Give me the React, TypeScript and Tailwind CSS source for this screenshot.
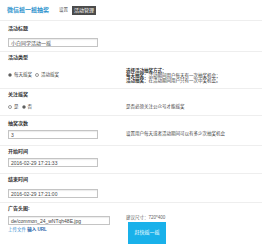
import React from 'react';

const FONT = "font-['Liberation_Sans','Noto_Sans_CJK_SC',sans-serif]";

function Radio({ checked, label }: { checked?: boolean; label: string }) {
  return (
    <span className="flex items-center gap-[2px] mr-[3px]">
      <span className="w-[4px] h-[4px] rounded-full border-[0.5px] border-[#999] bg-white flex items-center justify-center">
        {checked && <span className="w-[2px] h-[2px] rounded-full bg-[#333]" />}
      </span>
      <span>{label}</span>
    </span>
  );
}

function Input({ value, width = 'w-[90px]' }: { value: string; width?: string }) {
  return (
    <div
      className={`${width} h-[9px] border-[0.5px] border-[#c4c4c4] bg-white pl-[2px] text-[5px] leading-[8px] text-[#444] shadow-[inset_0_1px_1px_rgba(0,0,0,0.08)] overflow-hidden whitespace-nowrap`}
    >
      {value}
    </div>
  );
}

function Label({ text }: { text: string }) {
  return <div className="h-[10px] leading-[10px] text-[5px] font-bold text-[#333] pl-[8px]">{text}</div>;
}

export default function App() {
  return (
    <div className={`w-[262px] h-[249px] bg-white overflow-hidden ${FONT}`}>
      <div className="h-[21px] flex items-center pl-[7px] border-b-[0.5px] border-[#eee]">
        <span className="text-[6px] font-bold text-[#2a91cc]">微信摇一摇抽奖</span>
        <span className="ml-[10px] text-[4.5px] text-[#555]">设置</span>
        <span className="ml-[4px] bg-[#4b4b4b] text-white text-[5px] px-[2px] h-[9px] leading-[9px]">活动管理</span>
      </div>

      <div className="pt-[2px] pb-[4px] border-b-[0.5px] border-[#eee]">
        <Label text="活动标题" />
        <div className="pl-[8px] mt-[5px]">
          <Input value="小白同学活动一摇" />
        </div>
      </div>

      <div className="border-b-[0.5px] border-[#eee]">
        <Label text="活动类型" />
        <div className="h-[26px] flex items-center">
          <div className="w-[126px] pl-[8px] flex items-center text-[4.5px] text-[#444]">
            <Radio checked label="每天摇奖" />
            <Radio label="活动摇奖" />
          </div>
          <div className="text-[4.5px] leading-[5px] text-[#333] font-bold">
            <div>选择活动抽奖方式：</div>
            <div>每天抽奖：<span className="font-normal">活动期间用户每天有一次抽奖机会；</span></div>
            <div>活动抽奖：<span className="font-normal">在活动期间用户只有一次中奖机会。</span></div>
          </div>
        </div>
      </div>

      <div className="border-b-[0.5px] border-[#eee]">
        <Label text="关注摇奖" />
        <div className="h-[16px] flex items-center">
          <div className="w-[126px] pl-[8px] flex items-center text-[4.5px] text-[#444]">
            <Radio label="是" />
            <Radio checked label="否" />
          </div>
          <div className="text-[4.5px] text-[#444]">是否必须关注公众号才能摇奖</div>
        </div>
      </div>

      <div className="pt-[2px] pb-[6px] border-b-[0.5px] border-[#eee]">
        <Label text="抽奖次数" />
        <div className="flex items-center mt-[2px]">
          <div className="w-[126px] pl-[8px]">
            <Input value="3" />
          </div>
          <div className="text-[4.5px] text-[#444]">设置用户每天或者活动期间可以有多少次抽奖机会</div>
        </div>
      </div>

      <div className="pb-[6px] border-b-[0.5px] border-[#eee]">
        <Label text="开始时间" />
        <div className="pl-[8px] mt-[2px]">
          <Input value="2016-02-29 17:21:33" />
        </div>
      </div>

      <div className="pb-[4px] border-b-[0.5px] border-[#eee]">
        <Label text="结束时间" />
        <div className="pl-[8px] mt-[5px]">
          <Input value="2016-02-29 17:21:00" />
        </div>
      </div>

      <div>
        <Label text="广告头图:" />
        <div className="flex">
          <div className="w-[126px] pl-[8px] pt-[3px]">
            <Input value="de/common_24_wNTqh48E.jpg" width="w-[102px]" />
            <div className="h-[10px] leading-[10px] text-[4.5px]">
              <span className="text-[#3d8fd1]">上传文件</span>{' '}
              <span className="font-bold text-[#1f5fa6]">输入 URL</span>
            </div>
          </div>
          <div>
            <div className="h-[9px] leading-[10px] text-[4.5px] text-[#666]">建议尺寸：720*400</div>
            <div className="ml-[2px] w-[38px] h-[22px] bg-[#19b1ea] text-white text-[5px] flex items-center justify-center">
              赶快摇一摇
            </div>
          </div>
        </div>
      </div>
    </div>
  );
}
